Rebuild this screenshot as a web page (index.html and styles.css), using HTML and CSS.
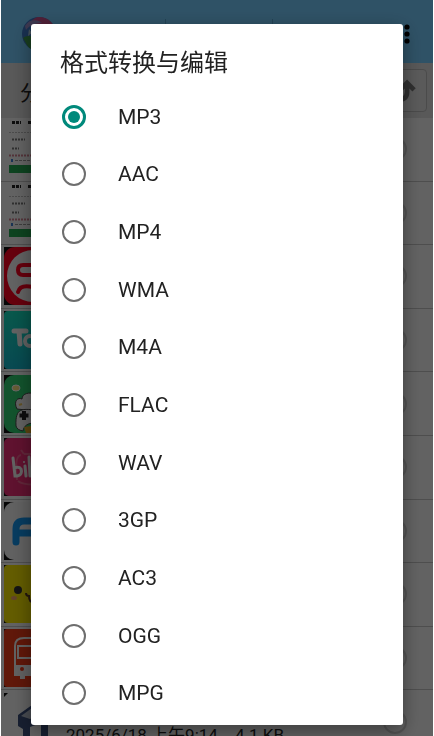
FILE: index.html
```html
<!DOCTYPE html>
<html lang="zh-CN">
<head>
  <meta charset="UTF-8">
  <meta name="viewport" content="width=device-width, initial-scale=1.0">
  <title>格式转换与编辑</title>
  <link rel="stylesheet" href="styles.css">
</head>
<body>

  <div class="screen">
    <header class="topbar">
      <svg class="logo" viewBox="0 0 36 36" aria-hidden="true">
        <defs>
          <clipPath id="ball"><circle cx="18" cy="18" r="17"/></clipPath>
        </defs>
        <g clip-path="url(#ball)">
          <rect width="36" height="36" fill="#3f78c8"/>
          <path d="M10 6C16 -2 28 -4 36 10L30 14C24 8 16 8 10 10Z" fill="#c8508c"/>
          <path d="M4 10C8 3 16 3 21 7C14 7 9 9 5 14Z" fill="#9a8cc8"/>
          <path d="M2 22C7 18 12 22 16 18V36H10Z" fill="#3f9c50"/>
          <path d="M8 13L11 17L7 20Z" fill="#a8c8dc"/>
        </g>
      </svg>
      <div class="tabs"><span class="tick"></span><span class="tick"></span></div>
      <button class="more" aria-label="更多">
        <svg viewBox="0 0 6 20"><circle cx="3" cy="3" r="2.6"/><circle cx="3" cy="10" r="2.6"/><circle cx="3" cy="17" r="2.6"/></svg>
      </button>
    </header>

    <div class="toolbar">
      <span class="toolbar-name">分</span>
      <button class="sort" aria-label="排序">
        <svg viewBox="0 0 24 24"><path d="M5 20C12 20 15.500 18 15.500 13V5M9.500 11L15.500 5L21.500 11"/></svg>
      </button>
    </div>

    <ul class="files">
      <li class="file">
        <svg class="thumb" viewBox="0 0 58 58">
          <path d="M8 2.500H17M24 2.500H30" stroke="#222" stroke-width="3" stroke-dasharray="3 1"/>
          <path d="M5 12.500H30" stroke="#bbb" stroke-dasharray="2 1"/>
          <path d="M8 19.500H21M8 28.500H15" stroke="#777" stroke-width="2" stroke-dasharray="2 1"/>
          <path d="M5 35.500H30" stroke="#d08090" stroke-width="2" stroke-dasharray="2 1"/>
          <rect x="7" y="39" width="2" height="3" fill="#3f7fd0"/>
          <path d="M11 40.500H30" stroke="#999" stroke-dasharray="3 1"/>
          <rect x="5" y="45" width="50" height="8" fill="#22a850"/>
        </svg>
        <input class="check" type="checkbox" aria-label="选择文件 1">
      </li>
      <li class="file">
        <svg class="thumb" viewBox="0 0 58 58">
          <path d="M8 2.500H17M24 2.500H30" stroke="#222" stroke-width="3" stroke-dasharray="3 1"/>
          <path d="M5 12.500H30" stroke="#bbb" stroke-dasharray="2 1"/>
          <path d="M8 19.500H21M8 28.500H15" stroke="#777" stroke-width="2" stroke-dasharray="2 1"/>
          <path d="M5 35.500H30" stroke="#d08090" stroke-width="2" stroke-dasharray="2 1"/>
          <rect x="7" y="39" width="2" height="3" fill="#3f7fd0"/>
          <path d="M11 40.500H30" stroke="#999" stroke-dasharray="3 1"/>
          <rect x="5" y="45" width="50" height="8" fill="#22a850"/>
        </svg>
        <input class="check" type="checkbox" aria-label="选择文件 2">
      </li>
      <li class="file">
        <svg class="thumb" viewBox="0 0 58 58">
          <rect width="58" height="58" fill="#111"/>
          <rect width="58" height="58" rx="11" fill="#ff0020"/>
          <circle cx="29" cy="29" r="26" fill="#f4f4f4"/>
          <path d="M34 18H19Q14 18 14 23Q14 28 19 28H34" fill="none" stroke="#ff0020" stroke-width="4"/>
          <path d="M14 45Q16 37 29 40" fill="none" stroke="#ff0020" stroke-width="4" stroke-linecap="round"/>
        </svg>
        <input class="check" type="checkbox" aria-label="选择文件 3">
      </li>
      <li class="file">
        <svg class="thumb" viewBox="0 0 58 58">
          <rect width="58" height="58" fill="#111"/>
          <linearGradient id="teal" x2="0" y2="1"><stop stop-color="#14dcbc"/><stop offset="1" stop-color="#14b6cc"/></linearGradient>
          <rect width="58" height="58" rx="4" fill="url(#teal)"/>
          <path d="M10 20H22M15 20L16 33" stroke="#f4f4f4" stroke-width="5" stroke-linecap="round" fill="none"/>
          <circle cx="26" cy="30" r="5" stroke="#f4f4f4" stroke-width="4" fill="none"/>
        </svg>
        <input class="check" type="checkbox" aria-label="选择文件 4">
      </li>
      <li class="file">
        <svg class="thumb" viewBox="0 0 58 58">
          <rect width="58" height="58" fill="#111"/>
          <rect width="58" height="58" rx="10" fill="#2ed070"/>
          <ellipse cx="12" cy="13" rx="4" ry="3" fill="#ffe680" stroke="#fff"/>
          <path d="M13 34C9 26 14 22 18 24C18 18 26 17 31 19V36Z" fill="#f4f4f4" stroke="#444"/>
          <path d="M12 51C11 32 19 34 31 35V48C23 48 20 51 19 56Q13 55 12 51Z" fill="#f4f4f4" stroke="#444"/>
          <path d="M20 36V45M15.500 40.500H24.500" stroke="#222" stroke-width="4"/>
          <path d="M20 52L34 50V58H22Z" fill="#e6aa28"/>
          <path d="M15 30L18 29" stroke="#f0c860" stroke-width="2"/>
        </svg>
        <input class="check" type="checkbox" aria-label="选择文件 5">
      </li>
      <li class="file">
        <svg class="thumb" viewBox="0 0 58 58">
          <rect width="58" height="58" fill="#111"/>
          <rect width="58" height="58" rx="5" fill="#ee2d75"/>
          <path d="M13 42Q10 18 17 17M20 16L17 12M20 16H40M14 43Q20 48 40 46" stroke="#f2608f" stroke-width="2" fill="none"/>
          <path d="M9 20L11 38Q19 38 17 31Q15 28 10 30M21 28L22 38M25 19L26 38" stroke="#f4f4f4" stroke-width="3" fill="none" stroke-linecap="round"/>
          <circle cx="20" cy="24" r="1" fill="#f4f4f4"/>
        </svg>
        <input class="check" type="checkbox" aria-label="选择文件 6">
      </li>
      <li class="file">
        <svg class="thumb" viewBox="0 0 58 58">
          <rect width="58" height="58" fill="#111"/>
          <rect width="58" height="58" rx="10" fill="#f2f2f2"/>
          <path d="M12 40V27Q12 19 20 19H40M12 31H30" stroke="#1296f0" stroke-width="7" stroke-linecap="round" fill="none"/>
        </svg>
        <input class="check" type="checkbox" aria-label="选择文件 7">
      </li>
      <li class="file">
        <svg class="thumb" viewBox="0 0 58 58">
          <rect width="58" height="58" fill="#111"/>
          <rect width="58" height="58" rx="4" fill="#f7e600"/>
          <circle cx="14" cy="25" r="4" fill="#333"/>
          <ellipse cx="10" cy="33" rx="3" ry="2" fill="#f5a86a"/>
          <path d="M22 28Q22 31 25 31Q25 38 30 37" stroke="#5a3a20" stroke-width="2" fill="none"/>
        </svg>
        <input class="check" type="checkbox" aria-label="选择文件 8">
      </li>
      <li class="file">
        <svg class="thumb" viewBox="0 0 58 58">
          <rect width="58" height="58" fill="#111"/>
          <rect width="58" height="58" rx="3" fill="#f03c18"/>
          <path d="M11 46V17Q11 9 20 9H40V46Z" fill="none" stroke="#f4f4f4" stroke-width="2"/>
          <path d="M14 17H40V29H14Z" fill="none" stroke="#f4f4f4" stroke-width="2"/>
          <path d="M11 36H40V47H11Z" fill="#f4f4f4"/>
          <circle cx="18" cy="40" r="2" fill="#f03c18"/>
          <path d="M16 46V50H21V46" fill="#f4f4f4"/>
        </svg>
        <input class="check" type="checkbox" aria-label="选择文件 9">
      </li>
      <li class="file">
        <svg class="thumb" viewBox="0 0 58 58">
          <path d="M0 0H4L0 4Z" fill="#111"/>
          <path d="M14 22L28 12L44 20V58H37V30L26 34V58H19V36L14 33Z" fill="#3b4f7c"/>
          <path d="M17 23L28 15L36 20L26 26Z" fill="#b4bccb"/>
        </svg>
        <span class="meta">2025/6/18 上午9:14，4.1 KB</span>
        <input class="check" type="checkbox" aria-label="选择文件 10">
      </li>
    </ul>
  </div>

  <div class="overlay">
    <form class="dialog" role="dialog" aria-labelledby="dialog-title">
      <h1 class="dialog-title" id="dialog-title">格式转换与编辑</h1>
      <div class="options">
        <label class="option"><input type="radio" name="format" value="mp3" checked>MP3</label>
        <label class="option"><input type="radio" name="format" value="aac">AAC</label>
        <label class="option"><input type="radio" name="format" value="mp4">MP4</label>
        <label class="option"><input type="radio" name="format" value="wma">WMA</label>
        <label class="option"><input type="radio" name="format" value="m4a">M4A</label>
        <label class="option"><input type="radio" name="format" value="flac">FLAC</label>
        <label class="option"><input type="radio" name="format" value="wav">WAV</label>
        <label class="option"><input type="radio" name="format" value="3gp">3GP</label>
        <label class="option"><input type="radio" name="format" value="ac3">AC3</label>
        <label class="option"><input type="radio" name="format" value="ogg">OGG</label>
        <label class="option"><input type="radio" name="format" value="mpg">MPG</label>
      </div>
    </form>
  </div>

</body>
</html>
```
FILE: styles.css
```css
* {
  box-sizing: border-box;
}
html, body {
  margin: 0;
  height: 100%;
}
body {
  padding: 0 1px;
  overflow: hidden;
  background: #fff;
  color: #222;
  font-family: Roboto, "Noto Sans CJK SC", sans-serif;
}
button {
  padding: 0;
  border: 0;
  background: none;
}
.screen {
  height: 100%;
  overflow: hidden;
  background: #f6f6f6;
}

/* page behind the dialog */
.topbar {
  display: flex;
  align-items: center;
  justify-content: space-between;
  height: 63px;
  padding: 4px 23px 0 20px;
  background: #76cdff;
}
.logo {
  width: 36px;
  height: 36px;
}
.tabs {
  display: flex;
  flex: 1;
  gap: 106px;
  padding-left: 108px;
}
.tick {
  width: 1px;
  height: 30px;
  background: #5aa8d6;
}
.more svg {
  display: block;
  width: 6px;
  height: 20px;
}
.toolbar {
  display: flex;
  align-items: center;
  justify-content: space-between;
  height: 55px;
  padding: 0 6px 0 19px;
  background: #dedede;
}
.toolbar-name {
  font-size: 21px;
}
.sort {
  display: flex;
  align-items: center;
  justify-content: center;
  width: 48px;
  height: 43px;
  border: 1px solid #bbb;
  border-radius: 4px;
  background: #e2e2e2;
}
.sort svg {
  width: 28px;
  height: 28px;
  fill: none;
  stroke: #777;
  stroke-width: 4;
}
.files {
  display: grid;
  grid-auto-rows: 1fr;
  height: 636px;
  margin: 0;
  padding: 0;
  list-style: none;
}
.file {
  display: flex;
  align-items: center;
  gap: 4px;
  padding: 0 26px 0 3px;
  border-bottom: 1px solid #c4c4c4;
}
.thumb {
  flex: none;
  width: 58px;
  height: 58px;
}
.meta {
  align-self: flex-end;
  padding-bottom: 6px;
  font-size: 17px;
  line-height: 24px;
  white-space: nowrap;
}
.check {
  appearance: none;
  width: 24px;
  height: 24px;
  margin: 0 0 0 auto;
  border: 2px solid #d0d0d0;
  border-radius: 50%;
}

/* format dialog */
.overlay {
  position: fixed;
  inset: 0 1px;
  display: flex;
  padding: 24px 30px 11px;
  background: rgba(0, 0, 0, .6);
}
.dialog {
  display: flex;
  flex: 1;
  flex-direction: column;
  padding-bottom: 3px;
  border-radius: 3px;
  background: #fff;
  box-shadow: 0 6px 20px rgba(0, 0, 0, .4);
}
.dialog-title {
  margin: 0;
  padding: 21px 29px 7px;
  font-size: 24px;
  font-weight: 400;
  line-height: 36px;
}
.options {
  display: grid;
  flex: 1;
  grid-auto-rows: 1fr;
}
.option {
  display: flex;
  align-items: center;
  gap: 32px;
  padding: 0 31px;
  font-size: 21px;
}
.option input {
  appearance: none;
  display: grid;
  place-items: center;
  width: 24px;
  height: 24px;
  margin: 0;
  border: 2px solid #6e6e6e;
  border-radius: 50%;
}
.option input:checked {
  border-width: 3px;
  border-color: #00897b;
}
.option input:checked::before {
  content: "";
  width: 12px;
  height: 12px;
  border-radius: 50%;
  background: #00897b;
}
```
